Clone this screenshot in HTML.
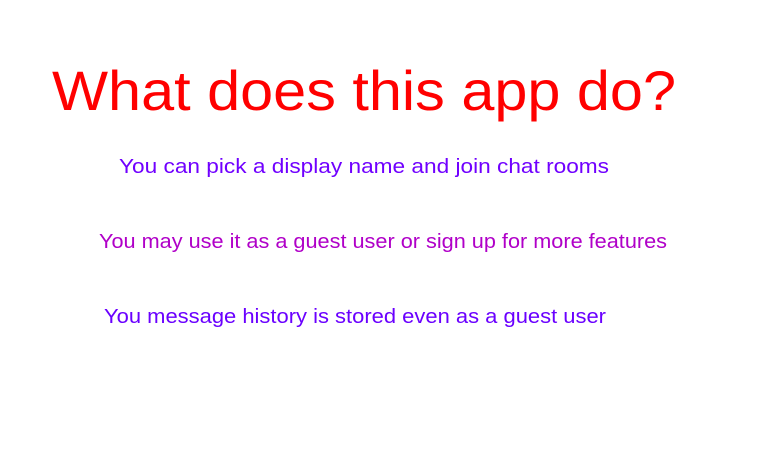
<!DOCTYPE html>
<html><head><style>html,body{margin:0;padding:0;background:#fff;}svg{display:block}</style></head>
<body>
<svg width="761" height="463" xmlns="http://www.w3.org/2000/svg" font-family="Liberation Sans, DejaVu Sans, sans-serif">
<text x="52" y="110" font-size="56" fill="#ff0000" textLength="624" lengthAdjust="spacingAndGlyphs">What does this app do?</text>
<text x="119" y="173" font-size="20" fill="#7000ff" textLength="490" lengthAdjust="spacingAndGlyphs">You can pick a display name and join chat rooms</text>
<text x="99" y="248" font-size="20" fill="#b000c8" textLength="568" lengthAdjust="spacingAndGlyphs">You may use it as a guest user or sign up for more features</text>
<text x="104" y="323" font-size="20" fill="#6a00ff" textLength="502" lengthAdjust="spacingAndGlyphs">You message history is stored even as a guest user</text>
</svg>
</body></html>
